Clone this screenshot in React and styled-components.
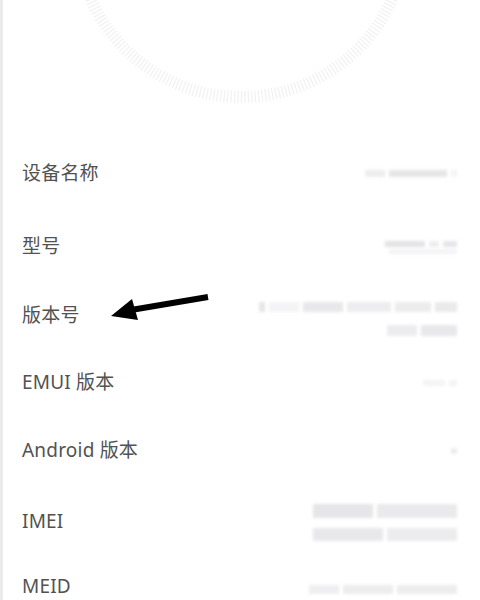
import React from "react";
import styled, { createGlobalStyle } from "styled-components";

const GlobalStyle = createGlobalStyle`
  html, body {
    margin: 0;
    padding: 0;
    background: #ffffff;
  }
  body {
    font-family: "Noto Sans", "Noto Sans CJK SC", sans-serif;
  }
`;

const Screen = styled.div`
  position: relative;
  width: 480px;
  height: 600px;
  overflow: hidden;
  background: #ffffff;
  border-left: 3px solid #ebebeb;
  box-sizing: border-box;
`;

const Header = styled.div`
  height: 136px;
  display: flex;
  justify-content: center;
`;

const List = styled.div`
  display: flex;
  flex-direction: column;
`;

const Row = styled.div`
  display: flex;
  align-items: center;
  justify-content: space-between;
  height: ${(p) => p.$h}px;
  padding: 0 23px 0 19px;
  box-sizing: border-box;
`;

const Label = styled.div`
  font-family: "Noto Sans", "Noto Sans CJK SC", sans-serif;
  font-size: 19px;
  line-height: 1.05;
  color: #525252;
  letter-spacing: 0.2px;
  margin-top: ${(p) => p.$shift || 0}px;
`;

const Value = styled.div`
  display: flex;
  flex-direction: column;
  align-items: flex-end;
  gap: ${(p) => p.$gap || 10}px;
  filter: blur(1.8px);
  margin-top: ${(p) => p.$shift || 0}px;
`;

const Line = styled.div`
  display: flex;
  gap: 4px;
  height: ${(p) => p.$h || 8}px;
`;

const Seg = styled.span`
  display: block;
  width: ${(p) => p.$w}px;
  height: 100%;
  background: #dcdce0;
  opacity: ${(p) => p.$o || 0.6};
`;

const Arrow = styled.svg`
  position: absolute;
  left: 105px;
  top: 292px;
`;

function Dial() {
  const ticks = [];
  const n = 300;
  const cx = 240;
  const cy = -68;
  for (let i = 0; i < n; i++) {
    const a = (i / n) * Math.PI * 2;
    const c = Math.cos(a);
    const s = Math.sin(a);
    ticks.push(
      <line
        key={i}
        x1={cx + c * 159}
        y1={cy + s * 159}
        x2={cx + c * 171}
        y2={cy + s * 171}
      />
    );
  }
  return (
    <svg width="477" height="136" viewBox="1.5 0 477 136">
      <g stroke="#f2f2f2" strokeWidth="1.3">{ticks}</g>
    </svg>
  );
}

const rows = [
  {
    label: "设备名称",
    h: 75,
    lines: [{ h: 7, segs: [[20, 0.5], [58, 0.7], [6, 0.3]] }],
  },
  {
    label: "型号",
    h: 72,
    lines: [
      { h: 6, segs: [[40, 0.8], [10, 0.5], [14, 0.7]] },
      { h: 5, segs: [[68, 0.3]] },
    ],
    gap: 2,
  },
  {
    label: "版本号",
    h: 66,
    lines: [
      { h: 10, segs: [[6, 0.7], [30, 0.3], [40, 0.65], [44, 0.5], [36, 0.55], [22, 0.6]] },
      { h: 11, segs: [[30, 0.55], [36, 0.65]] },
    ],
    gap: 13,
    vshift: 6,
  },
  {
    label: "EMUI 版本",
    h: 67,
    lines: [{ h: 6, segs: [[22, 0.3], [8, 0.3]] }],
  },
  {
    label: "Android 版本",
    h: 69,
    lines: [{ h: 6, segs: [[6, 0.55]] }],
  },
  {
    label: "IMEI",
    h: 74,
    lines: [
      { h: 14, segs: [[60, 0.7], [80, 0.6]] },
      { h: 13, segs: [[70, 0.65], [70, 0.55]] },
    ],
    gap: 10,
  },
  {
    label: "MEID",
    h: 41,
    shift: 14,
    vshift: 20,
    lines: [{ h: 9, segs: [[30, 0.45], [50, 0.5], [60, 0.5]] }],
  },
];

export default function App() {
  return (
    <>
      <GlobalStyle />
      <Screen>
        <Header>
          <Dial />
        </Header>
        <List>
          {rows.map((r) => (
            <Row key={r.label} $h={r.h}>
              <Label $shift={r.shift}>{r.label}</Label>
              <Value $gap={r.gap} $shift={r.vshift}>
                {r.lines.map((l, i) => (
                  <Line key={i} $h={l.h}>
                    {l.segs.map(([w, o], j) => (
                      <Seg key={j} $w={w} $o={o} />
                    ))}
                  </Line>
                ))}
              </Value>
            </Row>
          ))}
        </List>
        <Arrow width="105" height="36" viewBox="0 0 105 36">
          <path d="M100 5 L26 17.5" stroke="#000" strokeWidth="6" />
          <path d="M3 24 L24 7 L30 28 Z" fill="#000" />
        </Arrow>
      </Screen>
    </>
  );
}
